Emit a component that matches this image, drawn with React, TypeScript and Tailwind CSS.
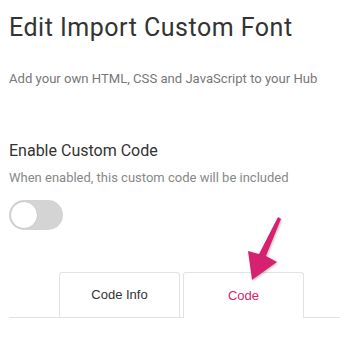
export default function App() {
  return (
    <div className="w-[340px] h-[345px] bg-white overflow-hidden font-['Roboto',sans-serif] relative">
      <div className="pl-[9px] pt-[13px]">
        <h1 className="text-[25px] leading-[30px] tracking-[0.5px] text-[#333]">Edit Import Custom Font</h1>
        <p className="mt-[26px] text-[13.1px] leading-[20px] text-[#777]">Add your own HTML, CSS and JavaScript to your Hub</p>
        <h2 className="mt-[51px] text-[16px] leading-[22px] text-[#333]">Enable Custom Code</h2>
        <p className="mt-[6px] text-[13px] leading-[20px] text-[#888]">When enabled, this custom code will be included</p>
        <div className="mt-[12px] w-[54px] h-[30px] rounded-full bg-[#d4d4d4] p-[2px]">
          <div className="w-[26px] h-[26px] rounded-full bg-white shadow-[0_0_1px_rgba(0,0,0,0.25)]" />
        </div>
      </div>
      <div className="mt-[42px] ml-[9px] flex items-end border-b border-[#e2e2e2] font-['Liberation_Sans',Arial,sans-serif] text-[13px]">
        <div className="ml-[50px] w-[121px] h-[45px] border border-b-0 border-[#e2e2e2] rounded-t-[3px] flex items-center justify-center text-[#333]">Code Info</div>
        <div className="ml-[3px] w-[121px] h-[46px] -mb-px bg-white border border-b-0 border-[#e2e2e2] rounded-t-[3px] flex items-center justify-center text-[#d6246e]">Code</div>
      </div>
      <svg className="absolute left-0 top-0" width="340" height="345" viewBox="0 0 340 345">
        <defs>
          <filter id="sh" x="-50%" y="-50%" width="200%" height="200%">
            <feDropShadow dx="1" dy="1" stdDeviation="1" floodColor="#000" floodOpacity="0.25" />
          </filter>
        </defs>
        <path d="M278 217 L281 219 L266 256 L277 262 L252 280 L248 251 L259 254 Z" fill="#d6246e" filter="url(#sh)" />
      </svg>
    </div>
  );
}
